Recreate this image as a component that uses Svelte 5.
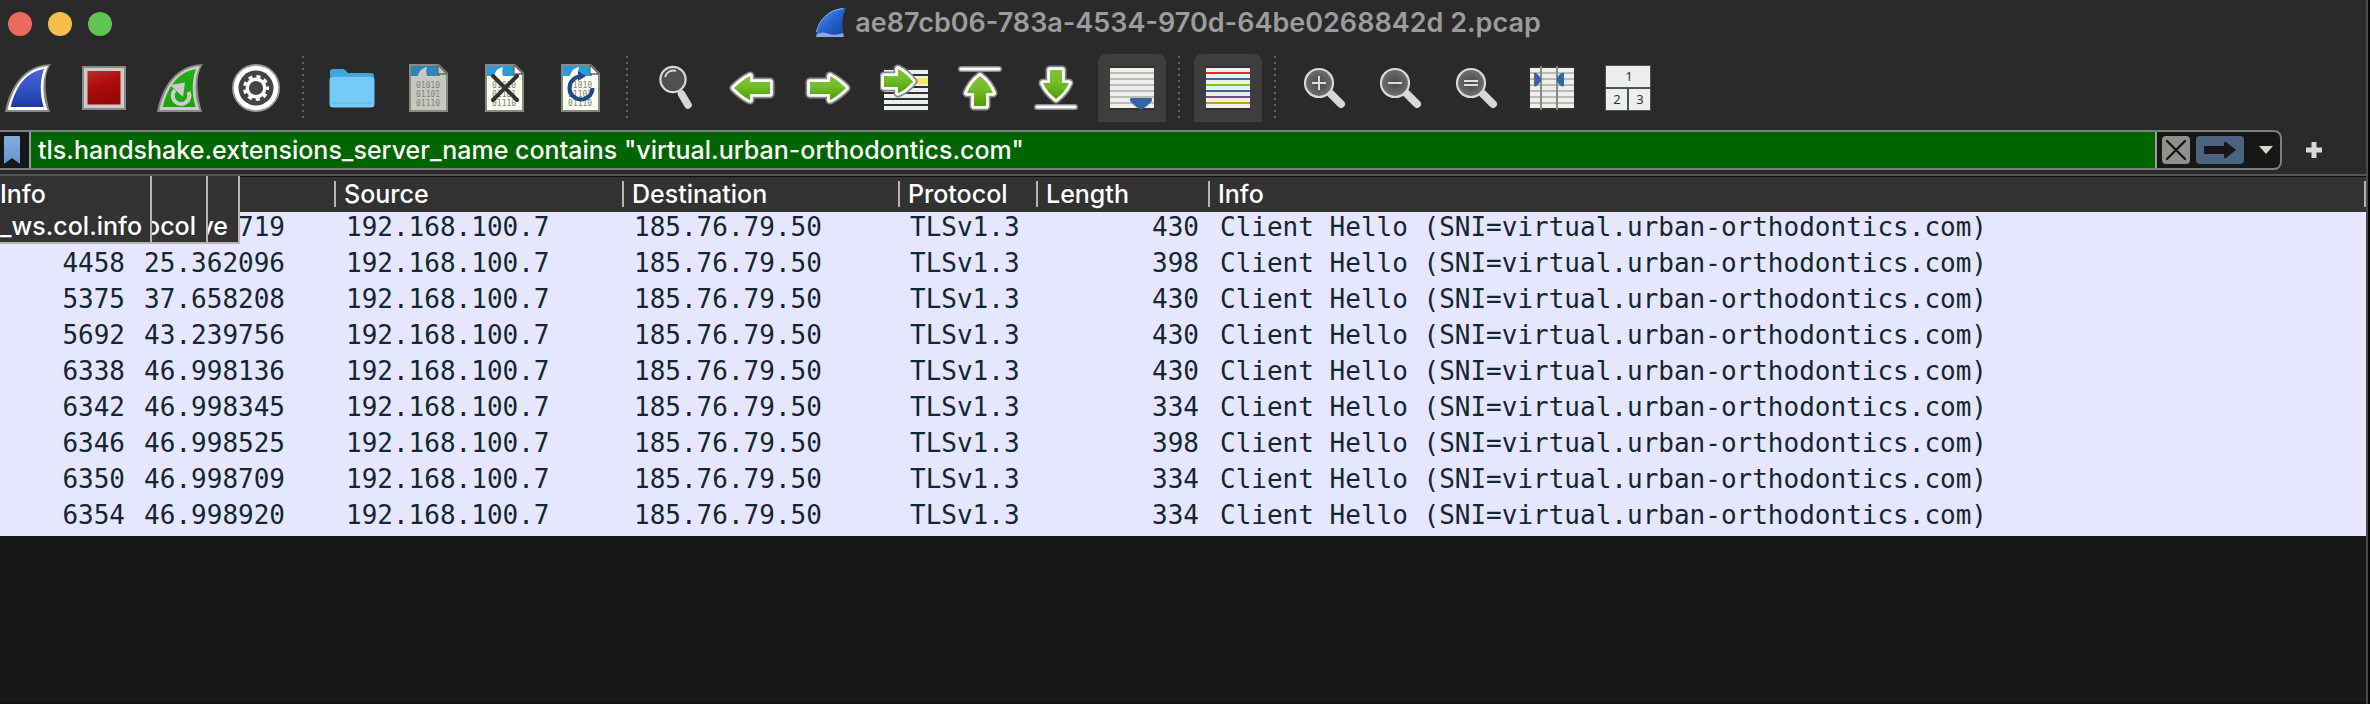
<script>
  const filterText = 'tls.handshake.extensions_server_name contains "virtual.urban-orthodontics.com"';

  const tools = [
    { icon: 'start', label: 'Start capture' },
    { icon: 'stop', label: 'Stop capture' },
    { icon: 'restart', label: 'Restart capture' },
    { icon: 'options', label: 'Capture options' },
    null,
    { icon: 'open', label: 'Open file' },
    { icon: 'save', label: 'Save file' },
    { icon: 'close', label: 'Close file' },
    { icon: 'reload', label: 'Reload file' },
    null,
    { icon: 'find', label: 'Find packet' },
    { icon: 'back', label: 'Previous packet' },
    { icon: 'forward', label: 'Next packet' },
    { icon: 'goto', label: 'Go to packet' },
    { icon: 'first', label: 'First packet' },
    { icon: 'last', label: 'Last packet' },
    { icon: 'autoscroll', label: 'Auto scroll', on: true },
    null,
    { icon: 'colorize', label: 'Colorize packets', on: true },
    null,
    { icon: 'zoomin', label: 'Zoom in' },
    { icon: 'zoomout', label: 'Zoom out' },
    { icon: 'zoomreset', label: 'Normal size' },
    { icon: 'resize', label: 'Resize columns' },
    { icon: 'layout', label: 'Reset layout' }
  ];

  const lineRows = [8, 14, 20, 26, 32, 38];
  const lineColors = ['#ef2929', '#3465a4', '#73d216', '#3465a4', '#75507b', '#c4a000'];

  const packets = [
    ['', '719', 430],
    ['4458', '25.362096', 398],
    ['5375', '37.658208', 430],
    ['5692', '43.239756', 430],
    ['6338', '46.998136', 430],
    ['6342', '46.998345', 334],
    ['6346', '46.998525', 398],
    ['6350', '46.998709', 334],
    ['6354', '46.998920', 334]
  ];
</script>

{#snippet arrow(d, fill)}
  <path {d} fill="none" stroke="#888a85" stroke-width="9" stroke-linejoin="round" />
  <path {d} fill="none" stroke="#fff" stroke-width="5.6" stroke-linejoin="round" />
  <path {d} {fill} />
{/snippet}

{#snippet doc(paper, sky, fin)}
  <path d="M5 0H35L44 9V48H5Z" fill="#888a85" />
  <path d="M7 2H34L42 10V46H7Z" fill={paper} />
  <path d="M7 2H34L36 12H7Z" fill={sky} />
  <path d="M14 12C15 7 18 4 23 3C22 6 22 9 23 12Z" fill={fin} />
  <path d="M34 1V10H43Z" fill={paper} stroke="#666" stroke-width="1.3" stroke-linejoin="round" />
  <g class="bits">
    <text x="12" y="24">01010</text>
    <text x="12" y="33">01101</text>
    <text x="12" y="42">01110</text>
  </g>
{/snippet}

{#snippet lens()}
  <path d="M31 30L41 40" stroke="#d8d8d8" stroke-width="8" stroke-linecap="round" />
  <circle cx="19" cy="19" r="14" fill="url(#glass)" stroke="#d8d8d8" stroke-width="2.2" />
{/snippet}

{#snippet glyph(name)}
  <svg class="icon" viewBox="0 0 48 48" aria-hidden="true">
    {#if name === 'start' || name === 'restart'}
      {@const rim = name === 'start' ? '#fff' : '#ccc'}
      <path d="M1 48C6 22 20 1 47 0C39 11 41 30 46 48Z" fill="#888" />
      <path d="M3.5 46C9 22 21 4 44 2C38 14 38 32 43.500 46Z" fill={rim} />
      <path d="M6.700 43C12 22 22 8 40 5C35.500 17 36 31 39.700 43Z" fill={name === 'start' ? 'url(#blue)' : 'url(#leaf)'} />
      {#if name === 'restart'}
        <path d="M19 26A8.300 8.300 0 1 0 32.500 28" fill="none" stroke="#ccc" stroke-width="4" />
        <path d="M14 21L29 18.500L27 33Z" fill="#ccc" />
      {/if}
    {:else if name === 'stop'}
      <path d="M2 2H46V46H2Z" fill="#888" />
      <path d="M4 4H44V44H4Z" fill="#ccc" />
      <path d="M7.500 7H40.500V40.500H7.500Z" fill="url(#red)" />
    {:else if name === 'options'}
      <circle cx="24" cy="24" r="24" fill="#999" />
      <circle cx="24" cy="24" r="22.300" fill="#fff" />
      <circle cx="24" cy="24" r="17.500" fill="#444" />
      <circle cx="24" cy="24" r="11.600" fill="none" stroke="#fff" stroke-width="3" stroke-dasharray="4.100 4" stroke-dashoffset="2" />
      <circle cx="24" cy="24" r="8.800" fill="none" stroke="#fff" stroke-width="3.400" />
    {:else if name === 'open'}
      <path d="M2 13V8Q2 5 5 5H14Q16 5 17 6L20 9H43Q46 9 46 12V16H2Z" fill="#3fa7dd" />
      <path d="M2 12H46V40Q46 43 43 43H5Q2 43 2 40Z" fill="#168cc8" />
      <path d="M1.500 16Q1.500 12.500 5 12.500H43Q46.500 12.500 46.500 16V40Q46.500 43.500 43 43.500H5Q1.500 43.500 1.500 40Z" fill="#73cbfa" />
      <path d="M2 39H46" stroke="#5ab7e8" />
    {:else if name === 'save'}
      {@render doc('#c8c8c0', '#2c86b8', '#c8c8c8')}
    {:else if name === 'close'}
      {@render doc('#fffff0', '#2a9bdc', '#fff')}
      <path d="M13 12L37 36M37 12L13 36" stroke="#2e3436" stroke-width="4" stroke-linecap="round" />
    {:else if name === 'reload'}
      {@render doc('#fffff0', '#2a9bdc', '#fff')}
      <path d="M26 12.500A11.500 11.500 0 1 0 36.500 24" fill="none" stroke="#204a87" stroke-width="4" />
      <path d="M22 7L30 12L22 17Z" fill="#204a87" />
    {:else if name === 'find'}
      <path d="M29.500 30L36 41" stroke="#d8d8d8" stroke-width="7.500" stroke-linecap="round" />
      <circle cx="21" cy="15.500" r="12.600" fill="#505050" stroke="#d8d8d8" stroke-width="2.200" />
      <path d="M13 13A8.500 8.500 0 0 1 24 7" fill="none" stroke="#ddd" stroke-width="1.800" />
    {:else if name === 'back'}
      {@render arrow('M42 18V30H23Q22 30 22 31V36Q14 32 6 24Q14 16 22 12V17Q22 18 23 18Z', 'url(#green)')}
    {:else if name === 'forward'}
      {@render arrow('M6 18V30H25Q26 30 26 31V36Q34 32 42 24Q34 16 26 12V17Q26 18 25 18Z', 'url(#green)')}
    {:else if name === 'goto'}
      <path d="M4 4H48V48H4Z" fill="#2e3436" />
      {#each [6, 12, 18, 24, 30, 36, 42] as y}
        <path d="M4 {y}H48V{y + 4}H4Z" fill="#eeeeec" />
      {/each}
      <path d="M30 14H48V20H30Z" fill="#fce94f" />
      {@render arrow('M4 12V23H18V29Q26 26 33 17.500Q26 9 18 5V12Z', 'url(#green)')}
    {:else if name === 'first'}
      <path d="M5 5H43" stroke="#888a85" stroke-width="6" stroke-linecap="round" />
      <path d="M5 5H43" stroke="#fff" stroke-width="3" stroke-linecap="round" />
      {@render arrow('M18 42V29H11Q15 19 24 12Q33 19 37 29H30V42Z', 'url(#green)')}
    {:else if name === 'last'}
      <path d="M5 43H43" stroke="#888a85" stroke-width="6" stroke-linecap="round" />
      <path d="M5 43H43" stroke="#fff" stroke-width="3" stroke-linecap="round" />
      {@render arrow('M18 6V19H11Q15 28 24 35Q33 28 37 19H30V6Z', 'url(#green)')}
    {:else if name === 'autoscroll' || name === 'colorize' || name === 'resize'}
      <path d="M2 2H46V46H2Z" fill="#2e3436" />
      <path d="M2 4H46V44H2Z" fill="#eeeeec" />
      {#each lineRows as y, i}
        <path d="M2 {y}H46V{y + 2}H2Z" fill={name === 'colorize' ? lineColors[i] : '#babdb6'} />
      {/each}
      {#if name === 'autoscroll'}
        <path d="M23 34H43Q45 35 43.500 37.500Q39 43 33 46Q27 43 22.500 37.500Q21 35 23 34Z" fill="#3465a4" />
      {:else if name === 'resize'}
        <path d="M13 2V46M29 2V46" stroke="#888a85" stroke-width="2" />
        <path d="M6 9Q9 7.500 13.500 15.500Q9 24 6 22ZM36 9Q32 7.500 28.500 15.500Q32 24 36 22Z" fill="#3465a4" />
      {/if}
    {:else if name === 'zoomin'}
      {@render lens()}
      <path d="M12 19H26M19 12V26" stroke="#ddd" stroke-width="2" />
    {:else if name === 'zoomout'}
      {@render lens()}
      <path d="M12 19H26" stroke="#ddd" stroke-width="2" />
    {:else if name === 'zoomreset'}
      {@render lens()}
      <path d="M12 17H26M12 21H26" stroke="#ddd" stroke-width="2" />
    {:else if name === 'layout'}
      <path d="M1 1H47V47H1Z" fill="#4c5355" />
      <path d="M2 2H46V23H2ZM2 25H23V46H2ZM25 25H46V46H25Z" fill="#eeeeec" />
      <g class="nums">
        <text x="25" y="17">1</text>
        <text x="13" y="40">2</text>
        <text x="36" y="40">3</text>
      </g>
    {/if}
  </svg>
{/snippet}

<svg class="defs" aria-hidden="true">
  <defs>
    <linearGradient id="blue" x1="0" y1="0" x2="0" y2="1">
      <stop offset="0" stop-color="#4a68d0" /><stop offset=".5" stop-color="#3253c6" /><stop offset="1" stop-color="#1c39a4" />
    </linearGradient>
    <linearGradient id="leaf" x1="0" y1="0" x2="0" y2="1">
      <stop offset="0" stop-color="#22ac18" /><stop offset="1" stop-color="#1ba60c" />
    </linearGradient>
    <linearGradient id="red" x1="0" y1="0" x2=".3" y2="1">
      <stop offset="0" stop-color="#b03030" /><stop offset=".5" stop-color="#b00b0b" /><stop offset="1" stop-color="#960808" />
    </linearGradient>
    <linearGradient id="green" x1="0" y1="0" x2="0" y2="1">
      <stop offset="0" stop-color="#7cc637" /><stop offset=".4" stop-color="#74be2c" /><stop offset="1" stop-color="#4ca000" />
    </linearGradient>
    <radialGradient id="glass">
      <stop offset="0" stop-color="#484848" /><stop offset="1" stop-color="#707070" />
    </radialGradient>
    <linearGradient id="mark" x1="0" y1="0" x2="0" y2="1">
      <stop offset="0" stop-color="#86aeda" /><stop offset="1" stop-color="#6496cb" />
    </linearGradient>
    <linearGradient id="fin" x1="0" y1="0" x2="1" y2="1">
      <stop offset="0" stop-color="#5f9cf0" /><stop offset=".5" stop-color="#2462d2" /><stop offset="1" stop-color="#173f9e" />
    </linearGradient>
  </defs>
</svg>

<main class="window">
  <header class="titlebar">
    <div class="lights">
      <button class="light red" aria-label="Close"></button>
      <button class="light yellow" aria-label="Minimize"></button>
      <button class="light green" aria-label="Zoom"></button>
    </div>
    <h1>
      <svg class="fin" viewBox="0 0 32 32" aria-hidden="true">
        <path d="M1 30C3 15 12 2 31 1C26 10 27 20 29 30Z" fill="url(#fin)" />
        <path d="M1.500 25C4 13 13 3 28 1.500" fill="none" stroke="#8fbcf6" stroke-width="1" />
        <path d="M1 30L2 27Q8 24 14 27Q21 29 28 26L29 30Z" fill="#8ca6dc" />
      </svg>
      <span>ae87cb06-783a-4534-970d-64be0268842d 2.pcap</span>
    </h1>
  </header>

  <nav class="toolbar">
    {#each tools as t}
      {#if t}
        <button class="tool" class:on={t.on} aria-label={t.label}>{@render glyph(t.icon)}</button>
      {:else}
        <span class="sep"></span>
      {/if}
    {/each}
  </nav>

  <div class="filterrow">
    <div class="filter">
      <button class="bookmark" aria-label="Bookmark filter">
        <svg viewBox="0 0 16 28" aria-hidden="true"><path d="M1 0H15Q16 0 16 1V28L8 22L0 28V1Q0 0 1 0Z" fill="url(#mark)" /></svg>
      </button>
      <input aria-label="Display filter" value={filterText} spellcheck="false" />
      <div class="actions">
        <button class="clear" aria-label="Clear filter">
          <svg viewBox="0 0 28 28" aria-hidden="true"><path d="M5 5L23 23M23 5L5 23" stroke="#171717" stroke-width="2.400" stroke-linecap="round" /></svg>
        </button>
        <button class="apply" aria-label="Apply filter">
          <svg viewBox="0 0 48 28" aria-hidden="true"><path d="M9 10H28V7Q28 5 30 6L40 14L30 22Q28 23 28 21V18H9Q8 18 8 17V11Q8 10 9 10Z" fill="#171717" /></svg>
        </button>
        <button class="recent" aria-label="Recent filters">
          <svg viewBox="0 0 14 8" aria-hidden="true"><path d="M0 0H14L7 8Z" fill="#d3d7cf" /></svg>
        </button>
      </div>
    </div>
    <button class="add" aria-label="Add filter button">
      <svg viewBox="0 0 16 16" aria-hidden="true"><path d="M5.500 0H10.500V5.500H16V10.500H10.500V16H5.500V10.500H0V5.500H5.500Z" fill="#d8d8d8" /></svg>
    </button>
  </div>

  <section class="packets">
    <table>
      <colgroup>
        <col class="no" /><col class="time" /><col class="source" /><col class="dest" /><col class="proto" /><col class="len" /><col />
      </colgroup>
      <thead>
        <tr>
          <th></th>
          <th></th>
          {#each ['Source', 'Destination', 'Protocol', 'Length', 'Info'] as h}
            <th><span>{h}</span></th>
          {/each}
        </tr>
      </thead>
      <tbody>
        {#each packets as [no, time, len]}
          <tr>
            <td class="num">{no}</td>
            <td class="clock">{time}</td>
            <td>192.168.100.7</td>
            <td>185.76.79.50</td>
            <td>TLSv1.3</td>
            <td class="num">{len}</td>
            <td>Client Hello (SNI=virtual.urban-orthodontics.com)</td>
          </tr>
        {/each}
      </tbody>
    </table>
    <div class="tips">
      <div class="tip wide"><span>Info</span><span>_ws.col.info</span></div>
      <div class="tip mid"><span>ocol</span></div>
      <div class="tip slim"><span>ve</span></div>
    </div>
  </section>
</main>

<style>
  :global(body) { margin: 0; background: #050505; }
  .defs { position: absolute; width: 0; height: 0; }
  button { display: flex; align-items: center; justify-content: center; padding: 0; border: 0; background: none; flex: none; }
  svg { display: block; }
  .window {
    box-sizing: border-box; min-height: 100vh; margin-right: 2px; overflow: hidden;
    border-right: 2px solid #4a4a4a; background: #181818; color: #fff;
    font-family: Inter, "Liberation Sans", sans-serif; font-size: 25px;
    display: flex; flex-direction: column;
  }
  .titlebar { display: grid; grid-template-columns: 1fr auto 1fr; align-items: center; height: 48px; background: #2a2a2a; }
  .lights { display: flex; gap: 16px; padding-left: 8px; }
  .light { width: 24px; height: 24px; border-radius: 50%; }
  .red { background: #ed6a5e; }
  .yellow { background: #f5bf4f; }
  .green { background: #61c554; }
  h1 { display: flex; align-items: center; gap: 8px; margin: 0; padding: 0 10px 3px 0; font-size: 27px; line-height: 32px; font-weight: 600; color: #9c9c9c; }
  .fin { width: 32px; height: 32px; }

  .toolbar { display: flex; gap: 8px; padding: 6px 0 8px; margin-left: -6px; background: #2a2a2a; }
  .tool { width: 68px; height: 68px; border-radius: 8px 8px 0 0; }
  .tool.on { background: #3e3e3e; }
  .icon { width: 48px; height: 48px; }
  .sep {
    width: 2px; height: 64px; margin: 2px 6px 0 4px;
    background: repeating-linear-gradient(#666 0 2px, transparent 2px 6px);
  }
  .bits text { font: 8px "DejaVu Sans Mono", monospace; fill: #80827c; }
  .nums text { font: 13px "Noto Sans", sans-serif; fill: #2e3436; text-anchor: middle; }

  .filterrow { display: flex; align-items: center; padding-bottom: 4px; background: #2a2a2a; border-bottom: 2px solid #555; }
  .filter { flex: 1; display: flex; box-sizing: border-box; height: 40px; border: 2px solid #7e7e7e; border-left: 0; border-radius: 0 8px 8px 0; background: #171717; overflow: hidden; }
  .bookmark { width: 29px; padding-right: 5px; box-sizing: border-box; }
  .bookmark svg { width: 16px; height: 28px; }
  input {
    flex: 1; min-width: 0; box-sizing: border-box; padding: 0 7px; border: 2px solid #9a9a9a; border-width: 0 2px;
    border-radius: 0; background: #006400; color: #fff; font: 500 25px Inter, "Liberation Sans", sans-serif; outline: 0;
  }
  .actions { display: flex; align-items: center; gap: 6px; padding: 0 2px 0 5px; }
  .clear { width: 28px; height: 28px; border-radius: 4px; background: #8f918c; }
  .apply { width: 48px; height: 28px; border-radius: 4px; background: #4b6280; }
  .clear svg, .apply svg { width: 100%; height: 100%; }
  .recent { width: 24px; height: 28px; margin-left: 4px; }
  .recent svg { width: 14px; height: 8px; }
  .add { width: 34px; height: 34px; margin: 0 35px 0 15px; }
  .add svg { width: 16px; height: 16px; }

  .packets { position: relative; flex: 1; border-bottom: 2px solid #121212; }
  table { width: 100%; table-layout: fixed; border-collapse: separate; border-spacing: 0; }
  .no { width: 134px; }
  .time { width: 200px; }
  .source { width: 288px; }
  .dest { width: 276px; }
  .proto { width: 138px; }
  .len { width: 172px; }
  th { height: 26px; padding: 4px 0 5px; border-top: 1px solid #0c0c0c; background: #323232; font-weight: 500; text-align: left; }
  th span { display: block; padding-left: 8px; border-left: 2px solid #b4b4b4; line-height: 26px; }
  th:last-child span { border-right: 2px solid #b4b4b4; }
  td {
    padding: 0 0 6px 12px; background: #e6e6ff; color: #12272e; white-space: nowrap;
    font-family: "DejaVu Sans Mono", "Liberation Mono", monospace; font-size: 26px; line-height: 30px;
  }
  .num { padding-right: 9px; text-align: right; }
  .clock { padding-right: 49px; padding-left: 0; text-align: right; }

  .tips { position: absolute; top: 0; left: 0; display: flex; line-height: 32px; font-weight: 500; }
  .tip {
    display: flex; flex-direction: column; justify-content: flex-end; align-items: flex-end; box-sizing: border-box; height: 68px;
    padding: 0 10px 0 0; border: 2px solid #b4b4b4; border-width: 0 2px 2px 0; background: #323232; overflow: hidden;
  }
  .wide { width: 152px; align-items: flex-start; }
  .mid { width: 56px; }
  .slim { width: 32px; }
</style>
